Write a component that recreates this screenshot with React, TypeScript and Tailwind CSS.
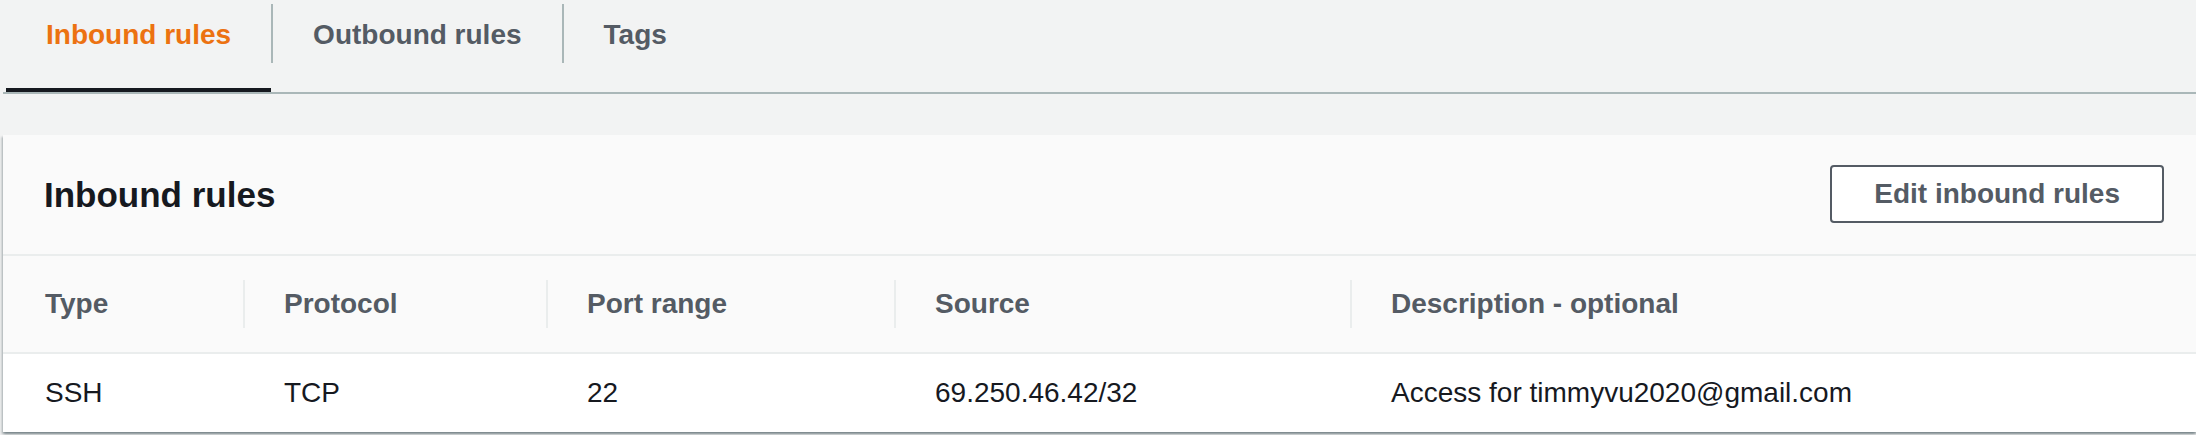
import React from 'react';

const font = { fontFamily: '"Liberation Sans", Arial, sans-serif' };

const columns = [
    { key: 'type', label: 'Type' },
    { key: 'protocol', label: 'Protocol' },
    { key: 'port', label: 'Port range' },
    { key: 'source', label: 'Source' },
    { key: 'description', label: 'Description - optional' },
];

const rules = [
    { type: 'SSH', protocol: 'TCP', port: '22', source: '69.250.46.42/32', description: 'Access for timmyvu2020@gmail.com' },
];

const tabs = ['Inbound rules', 'Outbound rules', 'Tags'];

export default function App() {
    const activeTab = 'Inbound rules';

    return (
        <div className="w-[2196px] h-[435px] bg-[#f2f3f3] overflow-hidden" style={font}>
            {/* Tabs */}
            <nav className="ml-[3px] pl-[3px] flex border-b-2 border-[#aab7b8]">
                {tabs.map((tab, i) => (
                    <React.Fragment key={tab}>
                        {i > 0 && <div className="w-[2px] h-[59px] mt-[4px] bg-[#aab7b8] shrink-0" />}
                        <button
                            className={`h-[92px] px-[40px] pt-[15px] flex items-start border-b-4 text-[28px] leading-[40px] font-bold ${
                                tab === activeTab
                                    ? 'border-[#16191f] text-[#ec7211]'
                                    : 'border-transparent text-[#545b64]'
                            }`}
                        >
                            {tab}
                        </button>
                    </React.Fragment>
                ))}
            </nav>

            {/* Rules panel */}
            <section className="ml-[3px] mt-[41px] bg-[#fafafa] shadow-[0_2px_2px_0_rgba(0,28,36,0.3),2px_2px_2px_0_rgba(0,28,36,0.15),-2px_2px_2px_0_rgba(0,28,36,0.15)]">
                <header className="h-[121px] pl-[41px] pr-[32px] flex items-center justify-between border-b-2 border-[#eaeded]">
                    <h2 className="text-[35px] font-bold text-[#16191f] leading-none">Inbound rules</h2>
                    <button className="h-[58px] px-[42px] mt-[-2px] bg-white border-2 border-[#545b64] rounded-[4px] text-[28px] font-bold text-[#545b64]">
                        Edit inbound rules
                    </button>
                </header>

                <div className="grid grid-cols-[240px_303px_348px_456px_1fr]">
                    {columns.map((col, i) => (
                        <div key={col.key} className="h-[98px] flex items-center border-b-2 border-[#eaeded]">
                            <div
                                className={`h-[48px] flex items-center text-[28px] font-bold text-[#545b64] ${
                                    i === 0 ? 'pl-[42px]' : 'pl-[39px] border-l-2 border-[#eaeded]'
                                }`}
                            >
                                {col.label}
                            </div>
                        </div>
                    ))}

                    {rules.map((rule) =>
                        columns.map((col, i) => (
                            <div
                                key={rule.source + col.key}
                                className={`h-[78px] bg-white flex items-center text-[28px] text-[#16191f] ${
                                    i === 0 ? 'pl-[42px]' : 'pl-[41px]'
                                }`}
                            >
                                {rule[col.key as keyof typeof rule]}
                            </div>
                        ))
                    )}
                </div>
            </section>
        </div>
    );
}
